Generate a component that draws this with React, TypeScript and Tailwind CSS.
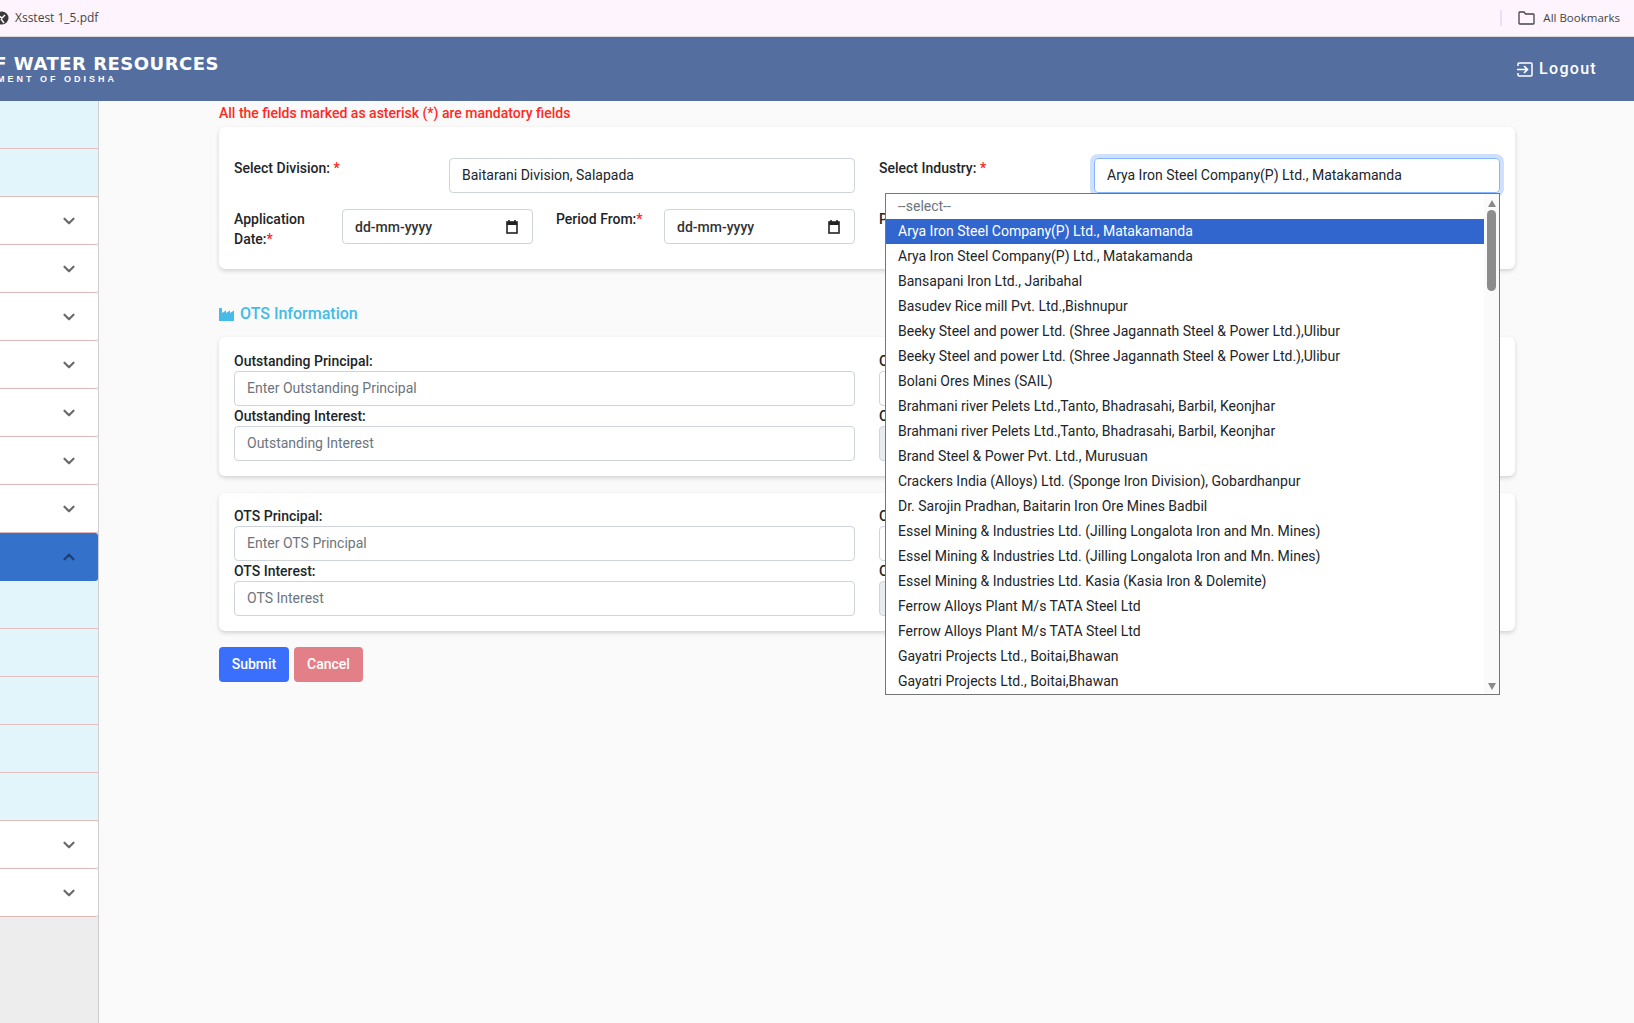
import { ChevronDown, ChevronUp } from "lucide-react";

const industries = [
  "Arya Iron Steel Company(P) Ltd., Matakamanda",
  "Arya Iron Steel Company(P) Ltd., Matakamanda",
  "Bansapani Iron Ltd., Jaribahal",
  "Basudev Rice mill Pvt. Ltd.,Bishnupur",
  "Beeky Steel and power Ltd. (Shree Jagannath Steel & Power Ltd.),Ulibur",
  "Beeky Steel and power Ltd. (Shree Jagannath Steel & Power Ltd.),Ulibur",
  "Bolani Ores Mines (SAIL)",
  "Brahmani river Pelets Ltd.,Tanto, Bhadrasahi, Barbil, Keonjhar",
  "Brahmani river Pelets Ltd.,Tanto, Bhadrasahi, Barbil, Keonjhar",
  "Brand Steel & Power Pvt. Ltd., Murusuan",
  "Crackers India (Alloys) Ltd. (Sponge Iron Division), Gobardhanpur",
  "Dr. Sarojin Pradhan, Baitarin Iron Ore Mines Badbil",
  "Essel Mining & Industries Ltd. (Jilling Longalota Iron and Mn. Mines)",
  "Essel Mining & Industries Ltd. (Jilling Longalota Iron and Mn. Mines)",
  "Essel Mining & Industries Ltd. Kasia (Kasia Iron & Dolemite)",
  "Ferrow Alloys Plant M/s TATA Steel Ltd",
  "Ferrow Alloys Plant M/s TATA Steel Ltd",
  "Gayatri Projects Ltd., Boitai,Bhawan",
  "Gayatri Projects Ltd., Boitai,Bhawan",
];

const rows: ("light" | "white" | "active")[] = [
  "light", "light", "white", "white", "white", "white", "white", "white", "white",
  "active", "light", "light", "light", "light", "light", "white", "white",
];

function SideRow({ kind }: { kind: "light" | "white" | "active" }) {
  if (kind === "light") {
    return <div className="h-[48px] bg-[#e1f5fa] border-b border-[#e4bdbd]" />;
  }
  if (kind === "active") {
    return (
      <div className="h-[48px] bg-[#3371cb] rounded-r-[3px] flex items-center justify-end pr-[20px]">
        <ChevronUp className="w-[18px] h-[18px] text-[#1f3e70]" strokeWidth={3} />
      </div>
    );
  }
  return (
    <div className="h-[48px] bg-white rounded-r-[3px] border-b border-[#e0b8b8] flex items-center justify-end pr-[20px]">
      <ChevronDown className="w-[18px] h-[18px] text-[#6b6b6b]" strokeWidth={3} />
    </div>
  );
}

function CalendarGlyph() {
  return (
    <svg width="12" height="14" viewBox="0 0 12 14" className="shrink-0">
      <path d="M3 0v2M9 0v2" stroke="#222" strokeWidth="1.6" />
      <rect x="1" y="2" width="10" height="11" fill="none" stroke="#222" strokeWidth="1.6" />
      <rect x="1" y="2" width="10" height="3" fill="#222" />
    </svg>
  );
}

function DateBox() {
  return (
    <div className="h-[35px] w-[191px] border border-[#ced4da] rounded-[4px] bg-white flex items-center justify-between pl-[12px] pr-[14px] text-[14px] text-[#333]">
      <span>dd-mm-yyyy</span>
      <CalendarGlyph />
    </div>
  );
}

function Field({ label, placeholder, disabled }: { label: string; placeholder?: string; disabled?: boolean }) {
  return (
    <div>
      <div className="h-[20px] leading-[20px] text-[14px] font-medium text-[#212529]">{label}</div>
      <div
        className={`h-[35px] border border-[#ced4da] rounded-[4px] flex items-center px-[12px] text-[14px] text-[#6c757d] ${
          disabled ? "bg-[#e9ecef]" : "bg-white"
        }`}
      >
        {placeholder}
      </div>
    </div>
  );
}

function Star() {
  return <span className="text-[#ff2020]">*</span>;
}

export default function App() {
  return (
    <div className="w-[1634px] h-[1023px] overflow-hidden flex flex-col bg-[#fafafa] font-['Roboto',sans-serif]">
      <div className="h-[37px] shrink-0 bg-[#fdf4fd] border-b border-[#d9d5d9] flex items-center justify-between pr-[14px]">
        <div className="flex items-center gap-[6px] -ml-[5px]">
          <svg width="14" height="14" viewBox="0 0 14 14">
            <circle cx="7" cy="7" r="6.5" fill="#3a3a3a" />
            <path d="M3 4.5l4 2.5 3-3M6 8l3 4" stroke="#fdf4fd" strokeWidth="1.5" fill="none" />
          </svg>
          <span className="text-[12px] text-[#444] font-['Open_Sans',sans-serif]">Xsstest 1_5.pdf</span>
        </div>
        <div className="flex items-center">
          <div className="w-[2px] h-[16px] bg-[#eadff5] mr-[16px]" />
          <svg width="17" height="14" viewBox="0 0 17 14" className="mr-[8px]">
            <path d="M1 12.2V1.8C1 1.3 1.3 1 1.8 1H6l1.6 2h7.6c.5 0 .8.3.8.8v8.4c0 .5-.3.8-.8.8H1.8c-.5 0-.8-.3-.8-.8z" fill="none" stroke="#444" strokeWidth="1.3" />
          </svg>
          <span className="text-[11.5px] text-[#444] font-['Open_Sans',sans-serif]">All Bookmarks</span>
        </div>
      </div>

      <div className="h-[64px] shrink-0 bg-[#546e9f] flex items-center justify-between pr-[37px]">
        <div className="w-[219px] overflow-hidden flex flex-col items-end text-white">
          <div className="whitespace-nowrap font-['DejaVu_Sans',sans-serif] font-bold text-[18px] leading-[20px] tracking-[0.5px]">
            DEPARTMENT OF WATER RESOURCES
          </div>
          <div className="whitespace-nowrap w-full flex justify-start">
            <span className="font-['Liberation_Sans',sans-serif] font-bold text-[9px] leading-[11px] tracking-[3px] pr-[114px] self-end whitespace-nowrap -ml-[60px]">
              GOVERNMENT OF ODISHA
            </span>
          </div>
        </div>
        <div className="flex items-center gap-[6px] text-white">
          <svg width="16" height="15" viewBox="0 0 16 15">
            <path d="M1 4V2a1 1 0 011-1h12a1 1 0 011 1v11a1 1 0 01-1 1H2a1 1 0 01-1-1v-2" fill="none" stroke="#fff" strokeWidth="1.5" />
            <path d="M0 7.5h10M7 4l3.5 3.5L7 11" fill="none" stroke="#fff" strokeWidth="1.7" />
          </svg>
          <span className="text-[16px] font-medium tracking-[1.3px]">Logout</span>
        </div>
      </div>

      <div className="flex-1 flex min-h-0">
        <div className="w-[99px] shrink-0 bg-[#ededed] border-r border-[#cfcfcf]">
          {rows.map((r, i) => (
            <SideRow key={i} kind={r} />
          ))}
        </div>

        <div className="pl-[120px] w-[1416px] shrink-0">
          <div className="h-[26px] leading-[24px] text-[14px] font-medium text-[#ff2a1f]">
            All the fields marked as asterisk (*) are mandatory fields
          </div>

          <div className="bg-white rounded-[6px] shadow-[0_2px_4px_rgba(0,0,0,0.16)] px-[15px] pt-[31px] pb-[20px]">
            <div className="grid grid-cols-2 gap-x-[24px] gap-y-[16px]">
              <div className="flex">
                <div className="w-[215px] pt-[0px] text-[14px] leading-[20px] font-medium text-[#212529]">
                  Select Division: <Star />
                </div>
                <div className="h-[35px] flex-1 border border-[#ced4da] rounded-[4px] flex items-center px-[12px] text-[14px] text-[#212529]">
                  Baitarani Division, Salapada
                </div>
              </div>
              <div className="flex">
                <div className="w-[215px] text-[14px] leading-[20px] font-medium text-[#212529]">
                  Select Industry: <Star />
                </div>
                <div className="relative h-[35px] flex-1 border border-[#86b7fe] rounded-[4px] shadow-[0_0_0_4px_#cfe0fe] flex items-center px-[12px] text-[14px] text-[#212529]">
                  Arya Iron Steel Company(P) Ltd., Matakamanda
                  <div className="absolute z-10 top-[34px] -left-[210px] w-[615px] h-[502px] bg-white border border-[#767676] text-[14px] flex overflow-hidden">
                    <div className="flex-1 min-w-0 font-normal">
                      <div className="h-[25px] leading-[25px] px-[12px] text-[#6c757d]">--select--</div>
                      {industries.map((t, i) => (
                        <div
                          key={i}
                          className={`h-[25px] leading-[25px] px-[12px] whitespace-nowrap ${
                            i === 0 ? "bg-[#3166cf] text-white" : "text-[#212529]"
                          }`}
                        >
                          {t}
                        </div>
                      ))}
                    </div>
                    <div className="w-[15px] shrink-0 bg-[#fafafa] flex flex-col items-center pt-[6px] pb-[4px]">
                      <div className="w-0 h-0 border-x-[4.5px] border-x-transparent border-b-[7px] border-b-[#8a8a8a]" />
                      <div className="w-[9px] h-[81px] rounded-full bg-[#8c8c8c] mt-[3px]" />
                      <div className="flex-1" />
                      <div className="w-0 h-0 border-x-[4.5px] border-x-transparent border-t-[7px] border-t-[#8a8a8a]" />
                    </div>
                  </div>
                </div>
              </div>

              <div className="flex text-[14px] leading-[20px] font-medium text-[#212529]">
                <div className="w-[108px]">
                  Application Date:<Star />
                </div>
                <DateBox />
                <div className="w-[108px] ml-[23px]">
                  Period From:<Star />
                </div>
                <DateBox />
              </div>
              <div className="flex text-[14px] leading-[20px] font-medium text-[#212529]">
                <div className="w-[108px]">
                  Period To:<Star />
                </div>
                <DateBox />
                <div className="w-[108px] ml-[23px]">
                  Payment:<Star />
                </div>
                <DateBox />
              </div>
            </div>
          </div>

          <div className="flex items-center gap-[5px] mt-[34px] h-[22px] text-[#44bbe8] text-[16px] font-medium">
            <svg width="16" height="13" viewBox="0 0 16 13">
              <path d="M0 13V0.8C0 .3.4 0 .8 0h1.4c.5 0 .8.3.8.8V5l4-2.5V5l4-2.5V5l4-2.5V13z" fill="#44bbe8" />
            </svg>
            OTS Information
          </div>

          <div className="mt-[12px] bg-white rounded-[6px] shadow-[0_2px_4px_rgba(0,0,0,0.16)] px-[15px] pt-[14px] pb-[15px]">
            <div className="grid grid-cols-2 gap-x-[24px]">
              <div>
                <Field label="Outstanding Principal:" placeholder="Enter Outstanding Principal" />
                <Field label="Outstanding Interest:" placeholder="Outstanding Interest" />
              </div>
              <div>
                <Field label="Outstanding Cess:" />
                <Field label="Outstanding Total:" disabled />
              </div>
            </div>
          </div>

          <div className="mt-[17px] bg-white rounded-[6px] shadow-[0_2px_4px_rgba(0,0,0,0.16)] px-[15px] pt-[13px] pb-[15px]">
            <div className="grid grid-cols-2 gap-x-[24px]">
              <div>
                <Field label="OTS Principal:" placeholder="Enter OTS Principal" />
                <Field label="OTS Interest:" placeholder="OTS Interest" />
              </div>
              <div>
                <Field label="OTS Cess:" />
                <Field label="OTS Total:" disabled />
              </div>
            </div>
          </div>

          <div className="flex gap-[5px] mt-[16px]">
            <button className="h-[35px] w-[70px] rounded-[4px] bg-[#3a6ffb] text-white text-[14px] font-medium">Submit</button>
            <button className="h-[35px] w-[69px] rounded-[4px] bg-[#e27f87] text-white text-[14px] font-medium">Cancel</button>
          </div>
        </div>
      </div>
    </div>
  );
}
